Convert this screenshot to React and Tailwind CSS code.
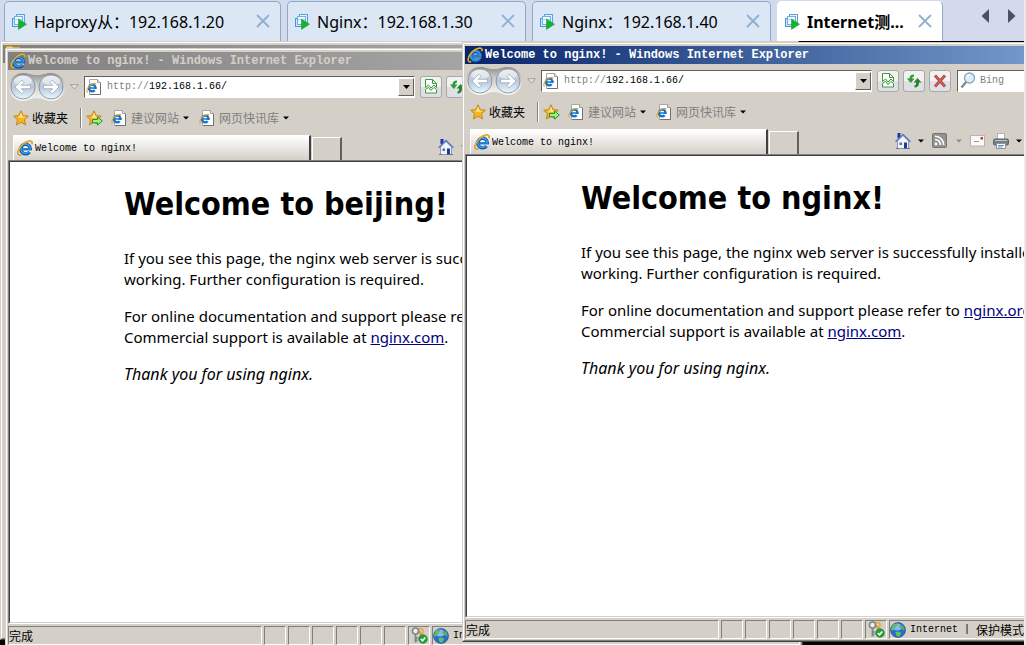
import React from "react";

const TABS = [
  { label: "Haproxy从：192.168.1.20", width: "w-[277px]" },
  { label: "Nginx：192.168.1.30", width: "w-[239px]" },
  { label: "Nginx：192.168.1.40", width: "w-[239px]" },
  { label: "Internet测...", width: "w-[166px]", active: true },
];

const UI_FONT = "font-['Noto_Sans','Noto_Sans_CJK_SC',sans-serif]";
const MONO_FONT = "font-['Liberation_Mono','Noto_Sans_CJK_SC',monospace]";
const CJK_FONT = "font-['Noto_Sans_CJK_SC',sans-serif]";

function MachineIcon() {
  return (
    <svg width="16" height="16" viewBox="0 0 16 16" className="shrink-0" aria-hidden="true">
      <rect x="4.500" y=".5" width="8" height="8" fill="#e4f2fd" stroke="#5aa2dc" />
      <rect x=".5" y="4.500" width="8" height="8" fill="#cfe6fa" stroke="#4a94d4" />
      <rect x="2.500" y="2.500" width="8" height="8" fill="#eef7ff" stroke="#6cb0e6" />
      <path d="M3 5.500H10" stroke="#b5d8f4" />
      <path d="M6.500 5L14.500 10.200L6.500 15.400z" fill="#14b42c" stroke="#0a9420" strokeWidth=".5" />
    </svg>
  );
}

function CloseIcon() {
  return (
    <svg width="14" height="14" viewBox="0 0 14 14" aria-hidden="true">
      <path d="M1 1L13 13M13 1L1 13" stroke="#8fb0d0" strokeWidth="1.8" />
    </svg>
  );
}

function IeGlyph({ x = 0, y = 0, scale = 1 }) {
  return (
    <g transform={`translate(${x} ${y}) scale(${scale})`}>
      <circle cx="8.600" cy="8.800" r="6" fill="#fff" opacity=".5" />
      <path d="M13.400 9.500A4.800 4.800 0 1 0 12.500 11.900" fill="none" stroke="#0c56a8" strokeWidth="3.400" />
      <path d="M5 9.300H15" stroke="#0c56a8" strokeWidth="2.200" />
      <path d="M13.200 9.200A4.700 4.700 0 1 0 12.200 11.600" fill="none" stroke="#2f98e6" strokeWidth="1.900" />
      <path d="M5 9.100H14.300" stroke="#2f98e6" strokeWidth="1" />
      <path d="M4.200 14.700C-.4 16.300.4 9.500 5 5C9.500.7 16.300-.9 14.900 4.300" fill="none" stroke="#c07c0c" strokeWidth="1.700" />
      <path d="M3.800 14.600C-.2 15.600.8 9.300 5.200 4.900C9.700.8 15.900-.4 14.900 3.900" fill="none" stroke="#ffc63c" strokeWidth="1" />
    </g>
  );
}

function IeIcon() {
  return (
    <svg width="16" height="16" viewBox="0 0 16 16" className="shrink-0" aria-hidden="true">
      <IeGlyph />
    </svg>
  );
}

function IePageIcon() {
  return (
    <svg width="16" height="16" viewBox="0 0 16 16" className="shrink-0" aria-hidden="true">
      <path d="M3.500.5H11.500L14.500 3.500V15.500H3.500z" fill="#fff" stroke="#a6a6a6" />
      <path d="M14.500 4V15.500H4" fill="none" stroke="#707070" />
      <path d="M11.500.5V3.500H14.500" fill="#e4e4e4" stroke="#9a9a9a" />
      <circle cx="6.200" cy="9" r="3.300" fill="none" stroke="#1672c8" strokeWidth="2.300" />
      <path d="M7.500 10.100H11V11.700H9z" fill="#fff" />
      <path d="M4 9H10.500" stroke="#1672c8" strokeWidth="1.500" />
      <path d="M2 13.300C-.3 13.200.8 9.200 3.700 6.600C6.500 4.300 10.300 3.400 10 5.800" fill="none" stroke="#f0a820" strokeWidth="1.100" />
    </svg>
  );
}

function StarIcon({ arrow }) {
  return (
    <svg width="17" height="16" viewBox="0 0 17 16" className="shrink-0" aria-hidden="true">
      <path
        d="M8 .8L10.200 5.600L15.300 6.200L11.500 9.700L12.600 14.900L8 12.300L3.400 14.900L4.500 9.700L.7 6.200L5.800 5.600z"
        fill="#f9b520"
        stroke="#bf7d0a"
        strokeWidth=".9"
        strokeLinejoin="round"
      />
      <path d="M8 2.600L9.600 6.400L13 7L8.500 8L4.500 7L6.600 6.200z" fill="#ffe693" />
      {arrow && (
        <path d="M6.500 9.500H11.500V7L16.300 11L11.500 15V12.800H6.500z" fill="#a8ec90" stroke="#1c9a28" strokeWidth="1" />
      )}
    </svg>
  );
}

function CaretIcon({ color = "#000" }) {
  return (
    <svg width="6" height="4" viewBox="0 0 6 4" className="shrink-0" aria-hidden="true">
      <path d="M0 .5H6L3 3.500z" fill={color} />
    </svg>
  );
}

function NavArrow({ cx, flip, id }) {
  return (
    <g>
      <circle cx={cx} cy="15" r="12" fill={`url(#${id})`} stroke="#8792a0" strokeWidth=".9" />
      <ellipse cx={cx} cy="8.500" rx="9" ry="5" fill="#fff" opacity=".45" />
      <path
        d="M-8 0L-1-6.800L1-4.600L-1.800-1.700H7.500V1.700H-1.800L1 4.600L-1 6.800z"
        transform={`translate(${cx} 15) scale(${flip ? -1 : 1} 1)`}
        fill="#fff"
        stroke="#93a3b6"
        strokeWidth=".7"
      />
    </g>
  );
}

function NavButtons({ id }) {
  return (
    <svg width="56" height="30" viewBox="0 0 56 30" className="ml-px shrink-0" role="img" aria-label="后退和前进">
      <defs>
        <linearGradient id={id} x1="0" y1="0" x2="0" y2="1">
          <stop offset="0" stopColor="#dfe4ea" />
          <stop offset=".5" stopColor="#b9c5d4" />
          <stop offset=".75" stopColor="#cfe0ee" />
          <stop offset="1" stopColor="#e6fbff" />
        </linearGradient>
        <linearGradient id={`${id}-rim`} x1="0" y1="0" x2="0" y2="1">
          <stop offset="0" stopColor="#8f8f8f" />
          <stop offset=".4" stopColor="#cfceca" />
          <stop offset="1" stopColor="#f8f8f6" />
        </linearGradient>
      </defs>
      <path
        d="M14 1C20 1 21 3 28 3S36 1 42 1A14 14 0 0 1 42 29C36 29 35 26 28 26S20 29 14 29A14 14 0 0 1 14 1z"
        fill={`url(#${id}-rim)`}
      />
      <NavArrow cx={14} id={id} />
      <NavArrow cx={42} flip id={id} />
    </svg>
  );
}

function BrokenPageIcon() {
  return (
    <svg width="12" height="15" viewBox="0 0 12 15" aria-hidden="true">
      <path d="M.5 8.500V.5H7.500L11.500 4.500V8.500L9 6L6 9L3.500 6z" fill="#fff" stroke="#3c9c3c" />
      <path d="M7.500.5V4.500H11.500" fill="none" stroke="#3c9c3c" />
      <path d="M.5 10.500V14H11.500V10.500L9 8.500L6 11.500L3.500 8.500z" fill="#fff" stroke="#3c9c3c" />
    </svg>
  );
}

function RefreshIcon() {
  return (
    <svg width="16" height="16" viewBox="0 0 16 16" aria-hidden="true">
      <path d="M8 1.500Q3.500 1.500 3.500 5.500H.8L4.800 10L8.600 5.500H6Q6 3.800 8 3.500z" fill="#2f9e36" />
      <path d="M8.500 14.500Q13 14.500 13 9.500H15.500L11.500 5L7.700 9.500H10.300Q10.300 12 8.500 12.500z" fill="#26802c" />
    </svg>
  );
}

function StopIcon() {
  return (
    <svg width="14" height="14" viewBox="0 0 14 14" aria-hidden="true">
      <path d="M2 1.500L12 12.500M12 1.500L2 12.500" stroke="#a83434" strokeWidth="2.700" />
      <path d="M2 1.500L12 12.500M12 1.500L2 12.500" stroke="#d9605a" strokeWidth="1.300" />
    </svg>
  );
}

function SearchIcon() {
  return (
    <svg width="16" height="17" viewBox="0 0 16 17" className="shrink-0" aria-hidden="true">
      <path d="M6.500 9.500L1.500 15.500" stroke="#808890" strokeWidth="2.200" />
      <circle cx="9.500" cy="6" r="5" fill="#dceefa" stroke="#8ea4b8" strokeWidth="1.300" />
      <path d="M6.500 5Q7.500 2.800 10 3" fill="none" stroke="#fff" strokeWidth="1.500" />
    </svg>
  );
}

function HomeIcon() {
  return (
    <svg width="16" height="16" viewBox="0 0 16 16" aria-hidden="true">
      <rect x="2.500" y="0" width="3" height="5" fill="#1c34b4" />
      <path d="M2.500 8L8 2.500L13.500 8V15.500H2.500z" fill="#f0f3fa" stroke="#7486ac" strokeWidth=".8" />
      <path d="M.6 8.800L8 1.500L15.400 8.800" fill="none" stroke="#5b7cba" strokeWidth="1.500" />
      <rect x="4.500" y="9.500" width="2.500" height="2.500" fill="#5f6f8a" />
      <rect x="9" y="9.500" width="3" height="6" fill="#1c3f94" />
      <path d="M1 15.500H4M12 15.500H15" stroke="#6a7888" />
    </svg>
  );
}

function FeedIcon() {
  return (
    <svg width="15" height="15" viewBox="0 0 15 15" aria-hidden="true">
      <rect x=".5" y=".5" width="14" height="14" rx="1" fill="#929292" stroke="#747474" />
      <circle cx="4" cy="11" r="1.400" fill="#fff" />
      <path d="M3 6.500A5.500 5.500 0 0 1 8.500 12M3 3.300A8.800 8.800 0 0 1 11.800 12" fill="none" stroke="#fff" strokeWidth="1.600" />
    </svg>
  );
}

function MailIcon() {
  return (
    <svg width="15" height="12" viewBox="0 0 15 12" aria-hidden="true">
      <rect x=".5" y=".5" width="14" height="10.500" fill="#fafafa" stroke="#b4b4b4" />
      <rect x="10.500" y="2" width="2.500" height="2.500" fill="#cf2c2c" />
      <path d="M4 6.500H9" stroke="#9a9a9a" />
    </svg>
  );
}

function PrinterIcon() {
  return (
    <svg width="16" height="16" viewBox="0 0 16 16" aria-hidden="true">
      <rect x="4.500" y=".5" width="7" height="6" fill="#fff" stroke="#b4b4b4" />
      <rect x=".5" y="6" width="15" height="6" rx="1.500" fill="#777d84" stroke="#5b6067" />
      <path d="M2 7.500H14" stroke="#c3c9d0" />
      <rect x="3.500" y="10.500" width="9" height="5" fill="#fff" stroke="#8d949c" />
      <path d="M5 12.500H11M5 14H9.500" stroke="#4c86c8" strokeWidth=".9" />
    </svg>
  );
}

function KeyIcon() {
  return (
    <svg width="17" height="17" viewBox="0 0 17 17" aria-hidden="true">
      <path d="M8 4L12 11" stroke="#d9952c" strokeWidth="2" />
      <circle cx="9.500" cy="4" r="2.600" fill="none" stroke="#e8a63c" strokeWidth="1.500" />
      <circle cx="4.500" cy="4" r="3" fill="#eee" stroke="#7f858c" strokeWidth="1.600" />
      <path d="M4.500 7V15.500M4.500 11H6.500M4.500 13.500H6.500" stroke="#7f858c" strokeWidth="1.800" />
      <circle cx="12" cy="12" r="4.300" fill="#27a03a" stroke="#0f7a22" strokeWidth=".6" />
      <path d="M9.800 12L11.500 13.800L14.300 10.400" fill="none" stroke="#fff" strokeWidth="1.500" />
    </svg>
  );
}

function GlobeIcon() {
  return (
    <svg width="16" height="16" viewBox="0 0 16 16" className="shrink-0" aria-hidden="true">
      <circle cx="8" cy="8" r="7.500" fill="#2b6ccc" stroke="#2a4f96" strokeWidth=".7" />
      <ellipse cx="7" cy="5" rx="5" ry="3.600" fill="#a4ccf6" opacity=".8" />
      <path d="M2 4.500Q4.500 1 7.500 1.500Q8 3.500 5.500 4.500Q6 7 3.500 7Q2.500 10 1 8Q1 6 2 4.500z" fill="#5abf62" />
      <path d="M9.500 3Q12.500 2.500 14 5L14.500 8Q12.500 8.500 11.500 6.500Q9 5.500 9.500 3z" fill="#4db658" />
      <path d="M5.500 10Q9 8.500 11 11Q10.500 14 8 15Q5.500 13.500 5.500 10z" fill="#58c460" />
    </svg>
  );
}

function FolderIcon() {
  return (
    <svg width="16" height="16" viewBox="0 0 16 16" className="shrink-0" aria-hidden="true">
      <path d="M1 0H7L8 1H15V14H1z" fill="#f3d774" stroke="#b08a2a" />
    </svg>
  );
}

function SessionTab({ tab }) {
  return (
    <div
      className={`${tab.width} flex h-10 shrink-0 items-center rounded-t-[5px] border border-b-0 pr-2.5 pl-[7px] ${
        tab.active ? "border-white border-r-[#8eabc6] bg-white font-bold" : "border-[#8eabc6] bg-[#dbe7f5]"
      }`}
    >
      <button type="button" className="flex min-w-0 flex-1 items-center gap-1.5 text-left text-base leading-6 whitespace-nowrap">
        <MachineIcon />
        <span>{tab.label}</span>
      </button>
      <button type="button" aria-label="关闭标签" className="mb-0.5 shrink-0">
        <CloseIcon />
      </button>
    </div>
  );
}

function SessionTabs() {
  return (
    <header className="flex h-[41px] shrink-0 items-end gap-1.5 overflow-hidden bg-[#d4daed] pl-1 text-black">
      {TABS.map((tab) => (
        <SessionTab key={tab.label} tab={tab} />
      ))}
      <div className="mr-2 ml-auto flex h-full items-center gap-[19px] pb-2.5">
        <button type="button" aria-label="向左滚动">
          <svg width="8" height="14" viewBox="0 0 8 14"><path d="M8 0V14L.5 7z" fill="#46535f" /></svg>
        </button>
        <button type="button" aria-label="向右滚动">
          <svg width="8" height="14" viewBox="0 0 8 14"><path d="M0 0V14L7.500 7z" fill="#46535f" /></svg>
        </button>
      </div>
    </header>
  );
}

function Frame({ className, children }) {
  return (
    <div className={`${className} absolute border border-t-[#d4d0c8] border-r-[#404040] border-b-[#404040] border-l-[#d4d0c8]`}>
      <div className="flex h-full flex-col border border-t-white border-r-[#808080] border-b-[#808080] border-l-white bg-[#d4d0c8] px-px pt-0.5 pb-px">
        {children}
      </div>
    </div>
  );
}

function ToolButton({ label, children }) {
  return (
    <button
      type="button"
      aria-label={label}
      className="flex size-[22px] shrink-0 items-center justify-center rounded-[3px] border border-[#a5a8ae] bg-linear-to-b from-[#f2f2f0] from-50% to-[#dfe0e4] to-50%"
    >
      {children}
    </button>
  );
}

function AddressRow({ id }) {
  return (
    <div className="flex h-[33px] shrink-0 items-center">
      <NavButtons id={`${id}-nav`} />
      <button type="button" aria-label="最近的页面" className="flex w-[19px] shrink-0 justify-center">
        <svg width="9" height="6" viewBox="0 0 9 6"><path d="M.7.700H8.300L4.500 5z" fill="#e8e6e2" stroke="#a09e98" /></svg>
      </button>
      <div className="flex h-[22px] w-[331px] shrink-0 items-center border border-t-[#606060] border-r-white border-b-white border-l-[#606060] bg-white pl-px text-[10px]">
        <IePageIcon />
        <label htmlFor={`${id}-url`} className="pl-[5px] text-[#808080]">http://</label>
        <input id={`${id}-url`} defaultValue="192.168.1.66/" className="min-w-0 flex-1 bg-transparent text-black outline-none" />
        <button
          type="button"
          aria-label="显示地址列表"
          className="flex h-[18px] w-4 items-center justify-center border border-t-white border-r-[#606060] border-b-[#606060] border-l-white bg-[#d4d0c8]"
        >
          <svg width="7" height="4" viewBox="0 0 7 4"><path d="M0 0H7L3.500 4z" fill="#000" /></svg>
        </button>
      </div>
      <div className="flex gap-1 pr-1.5 pl-[5px]">
        <ToolButton label="兼容性视图"><BrokenPageIcon /></ToolButton>
        <ToolButton label="刷新"><RefreshIcon /></ToolButton>
        <ToolButton label="停止"><StopIcon /></ToolButton>
      </div>
      <div className="flex h-[22px] flex-1 items-center gap-1 border border-t-[#606060] border-r-white border-b-white border-l-[#606060] bg-white pl-0.5 text-[10px]">
        <SearchIcon />
        <input aria-label="搜索" placeholder="Bing" className="min-w-0 flex-1 bg-transparent outline-none placeholder:text-[#808080]" />
      </div>
    </div>
  );
}

function FavoritesRow() {
  return (
    <div className={`${CJK_FONT} flex h-[30px] shrink-0 items-center pl-[5px] text-xs`}>
      <button type="button" className="flex items-center gap-0.5 whitespace-nowrap">
        <StarIcon />
        <span>收藏夹</span>
      </button>
      <div className="ml-3 h-5 w-0.5 border-r border-l border-r-white border-l-[#808080]" />
      <button type="button" aria-label="添加到收藏夹栏" className="mr-2 ml-1">
        <StarIcon arrow />
      </button>
      <div className="flex gap-2.5 text-[#808080]">
        {["建议网站", "网页快讯库"].map((name) => (
          <button type="button" key={name} className="flex items-center gap-1 whitespace-nowrap">
            <IePageIcon />
            <span>{name}</span>
            <CaretIcon />
          </button>
        ))}
      </div>
    </div>
  );
}

function PageTabsRow() {
  return (
    <div className="flex h-[27px] shrink-0 items-end pl-[5px]">
      <button
        type="button"
        className="flex h-[25px] w-[298px] shrink-0 items-center gap-0.5 border-t border-r-2 border-l border-t-white border-r-[#404040] border-l-white bg-linear-to-b from-white to-[#d4d0c8] pl-[3px] text-[10px] whitespace-nowrap"
      >
        <IeIcon />
        <span>Welcome to nginx!</span>
      </button>
      <button
        type="button"
        aria-label="新选项卡"
        className="ml-px h-[23px] w-[30px] shrink-0 border-t border-r-2 border-l border-t-white border-r-[#606060] border-l-white"
      />
      <div className="ml-24 flex h-full shrink-0 items-center">
        <button type="button" aria-label="主页" className="flex items-center gap-[7px]"><HomeIcon /><CaretIcon /></button>
        <button type="button" aria-label="源" className="ml-2 flex items-center gap-[9px]"><FeedIcon /><CaretIcon color="#8c8a84" /></button>
        <button type="button" aria-label="阅读邮件" className="ml-2"><MailIcon /></button>
        <button type="button" aria-label="打印" className="ml-2 flex items-center gap-[7px]"><PrinterIcon /><CaretIcon /></button>
      </div>
    </div>
  );
}

function StatusCell({ className = "w-[22px]", children }) {
  return (
    <div className={`${className} flex items-center overflow-hidden border border-t-[#808080] border-r-white border-b-white border-l-[#808080] whitespace-nowrap`}>
      {children}
    </div>
  );
}

function StatusBar() {
  return (
    <div className="flex h-[21px] shrink-0 gap-0.5 pt-0.5">
      <StatusCell className={`${CJK_FONT} w-[254px] text-xs`}>完成</StatusCell>
      <StatusCell />
      <StatusCell />
      <StatusCell />
      <StatusCell />
      <StatusCell />
      <StatusCell />
      <StatusCell className="w-[22px] justify-center"><KeyIcon /></StatusCell>
      <StatusCell className="flex-1">
        <GlobeIcon />
        <span className="pl-1 text-[10px]">Internet |</span>
        <span className={`${CJK_FONT} pl-1.5 text-xs`}>保护模式: 启用</span>
      </StatusCell>
    </div>
  );
}

function WelcomePage({ name }) {
  return (
    <main className="min-h-0 flex-1 overflow-hidden border border-t-[#808080] border-r-white border-b-white border-l-[#808080]">
      <div className={`${UI_FONT} h-full overflow-hidden border border-t-[#404040] border-r-[#d4d0c8] border-b-[#d4d0c8] border-l-[#404040] bg-white`}>
        <article className="mx-auto w-[560px] pt-[22px] text-[15px] leading-[21px] whitespace-nowrap text-black">
          <h1 className="mb-6 font-['DejaVu_Sans_Condensed','DejaVu_Sans',sans-serif] text-[32px] leading-10 font-bold">Welcome to {name}!</h1>
          <p className="mb-4">
            If you see this page, the nginx web server is successfully installed and<br />
            working. Further configuration is required.
          </p>
          <p className="mb-4">
            For online documentation and support please refer to{" "}
            <a href="#nginx-org" className="text-[#000080] underline">nginx.org</a>.<br />
            Commercial support is available at{" "}
            <a href="#nginx-com" className="text-[#000080] underline">nginx.com</a>.
          </p>
          <p className="text-base leading-[21px]"><em>Thank you for using nginx.</em></p>
        </article>
      </div>
    </main>
  );
}

function BrowserWindow({ id, place, active, name }) {
  return (
    <Frame className={`${place} h-[600px] w-[798px]`}>
      <div
        className={`flex h-[18px] shrink-0 items-center gap-0.5 bg-linear-to-r pl-0.5 text-xs font-bold whitespace-nowrap ${
          active ? "from-[#0a246a] to-[#a6caf0] text-white" : "from-[#808080] to-[#c0c0c0] text-[#d4d0c8]"
        }`}
      >
        <IeIcon />
        <span>Welcome to nginx! - Windows Internet Explorer</span>
      </div>
      <AddressRow id={id} />
      <FavoritesRow />
      <PageTabsRow />
      <WelcomePage name={name} />
      <StatusBar />
    </Frame>
  );
}

export default function App() {
  return (
    <div className={`${UI_FONT} flex h-screen flex-col overflow-hidden bg-[#e9e9e9] pr-0.5`}>
      <SessionTabs />
      <div className={`${MONO_FONT} relative min-h-0 flex-1 overflow-hidden bg-black`}>
        <Frame className="top-0 left-0 h-[599px] w-[799px]">
          <div className="flex h-[18px] items-center bg-linear-to-r from-[#808080] to-[#c0c0c0] pl-0.5">
            <FolderIcon />
          </div>
        </Frame>
        <BrowserWindow id="beijing" place="top-[7px] left-[5px]" name="beijing" />
        <BrowserWindow id="nginx" place="top-px left-[462px]" name="nginx" active />
      </div>
    </div>
  );
}
